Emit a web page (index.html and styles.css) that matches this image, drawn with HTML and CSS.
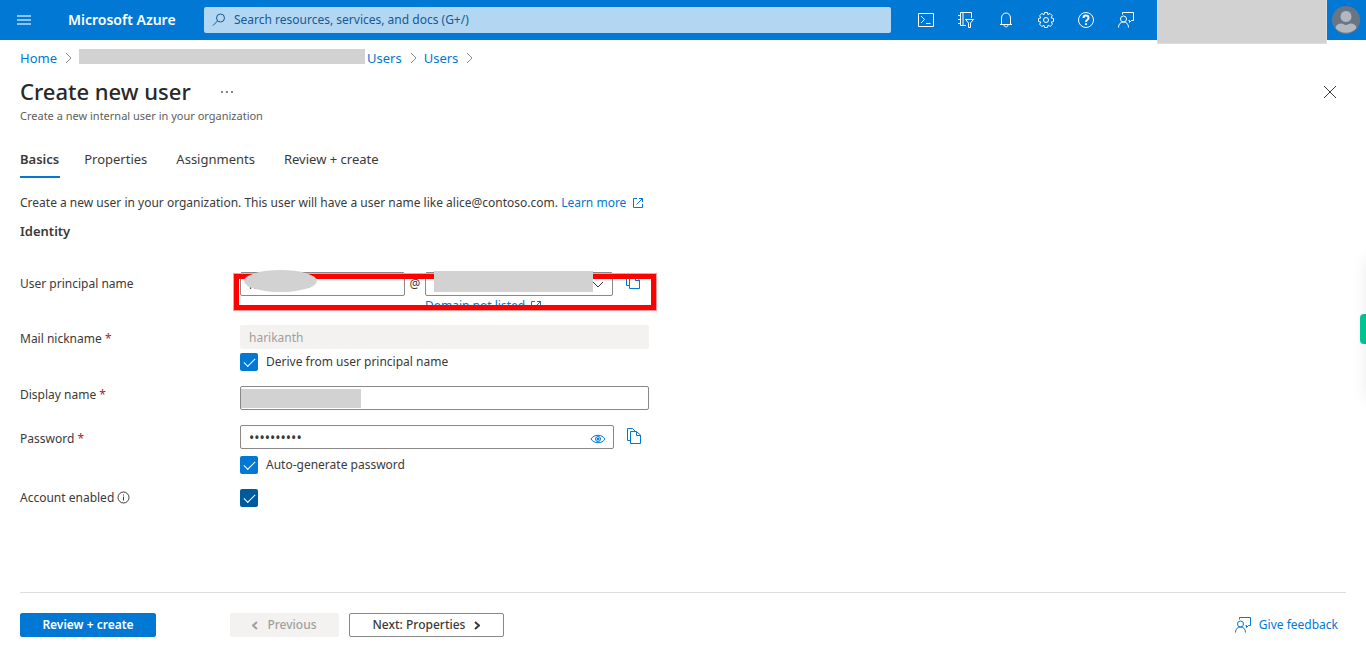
FILE: index.html
```html
<!DOCTYPE html>
<html lang="en">
<head>
<meta charset="utf-8">
<meta name="viewport" content="width=device-width, initial-scale=1">
<title>Create new user - Microsoft Azure</title>
<link rel="stylesheet" href="styles.css">
</head>
<body>
<svg class="defs" width="0" height="0" aria-hidden="true">
  <symbol id="copy" viewBox="0 0 16 16"><path d="M4.5 12.500H1.500V.5H6.500L9 3M4.500 3.500H10.500L14.500 7V15.500H4.500ZM10.500 3.500V7.500H14.500"/></symbol>
  <symbol id="external" viewBox="0 0 12 12"><path d="M5 1.500H1.500V10.500H10.500V7M7 1.500H10.500V5M10.500 1.500L4.500 7.500"/></symbol>
  <symbol id="feedback" viewBox="0 0 18 18"><path d="M5.500 3.500V1.500H16.500V9.500H14.500L12.500 11.500V9.500H11.500"/><circle cx="6.500" cy="8" r="3"/><path d="M1.500 16.500C1.500 13 3.500 11 6.500 11S11.500 13 11.500 16.500"/></symbol>
  <symbol id="chevron" viewBox="0 0 8 12"><path d="M1 1L6 6L1 11"/></symbol>
</svg>
<header class="topbar">
  <button class="icon-button menu" aria-label="Show portal menu"><svg width="14" height="10" viewBox="0 0 14 10"><path d="M0 1H14M0 5H14M0 9H14"/></svg></button>
  <a class="brand" href="#">Microsoft Azure</a>
  <div class="search">
    <svg width="14" height="14" viewBox="0 0 14 14"><circle cx="8.500" cy="5" r="4"/><path d="M5.500 8L1 12.500"/></svg>
    <input type="text" aria-label="Search" placeholder="Search resources, services, and docs (G+/)">
  </div>
  <nav class="tools" aria-label="Portal tools">
    <button class="icon-button" aria-label="Cloud Shell"><svg width="18" height="18" viewBox="0 0 18 18"><path d="M1.500 2.500H16.500V15.500H1.500ZM4 5L7.500 8.500L4 12M9 12.500H13.500"/></svg></button>
    <button class="icon-button" aria-label="Directories"><svg width="18" height="18" viewBox="0 0 18 18"><path d="M9 14.500H3.500V1.500H14.500V7M6 1.500V14.500M1 4.500H4M1 8.500H4M1 12.500H4M8.500 8.500H16.500L13.500 12V16.500H11.500V12Z"/></svg></button>
    <button class="icon-button" aria-label="Notifications"><svg width="18" height="18" viewBox="0 0 18 18"><path d="M3 13.500H15M4.500 13.500V7C4.500 4 6.500 2 9 2S13.500 4 13.500 7V13.500M7 14C7 16.500 11 16.500 11 14"/></svg></button>
    <button class="icon-button" aria-label="Settings"><svg width="18" height="18" viewBox="0 0 18 18"><circle cx="9" cy="9" r="2.500"/><path d="M7.600 1.500H10.400L10.900 3.700L13 2.400L15.200 4.600L14.100 6.800L16.500 7.500V10.500L14.300 11L15.500 13.200L13.300 15.300L11.100 14.200L10.400 16.500H7.600L7 14.300L4.800 15.500L2.600 13.200L3.800 11L1.500 10.500V7.500L3.800 6.900L2.600 4.700L4.800 2.500L7 3.700Z"/></svg></button>
    <button class="icon-button" aria-label="Help"><svg width="18" height="18" viewBox="0 0 18 18"><circle cx="9" cy="9" r="7.500"/><path class="heavy" d="M6.500 7C6.500 3.800 11.500 3.800 11.500 7C11.500 8.800 9 8.700 9 11M9 12.300V14"/></svg></button>
    <button class="icon-button" aria-label="Feedback"><svg width="18" height="18"><use href="#feedback"/></svg></button>
  </nav>
  <div class="account"><span class="account-mask"></span></div>
  <button class="avatar" aria-label="Account"><svg width="28" height="28" viewBox="0 0 28 28"><circle class="disc" cx="14" cy="14" r="14"/><path class="person" d="M3 22C4 18 7 17 10 17Q14 20 18 17C21 17 24 18 25 22A14 14 0 0 1 3 22Z"/><circle class="person" cx="14" cy="10.500" r="6"/></svg></button>
</header>

<main class="page">
  <nav class="crumbs" aria-label="Breadcrumb">
    <a href="#">Home</a><svg width="8" height="12"><use href="#chevron"/></svg><span class="crumb-mask"></span><a href="#">Users</a><svg width="8" height="12"><use href="#chevron"/></svg><a href="#">Users</a><svg width="8" height="12"><use href="#chevron"/></svg>
  </nav>
  <div class="heading">
    <h1>Create new user</h1>
    <button class="icon-button more" aria-label="More"><svg width="12" height="4" viewBox="0 0 12 4"><circle cx="1" cy="2" r="1"/><circle cx="6" cy="2" r="1"/><circle cx="11" cy="2" r="1"/></svg></button>
    <button class="icon-button close" aria-label="Close"><svg width="12" height="12" viewBox="0 0 12 12"><path d="M0 0L12 12M12 0L0 12"/></svg></button>
  </div>
  <p class="subtitle">Create a new internal user in your organization</p>

  <div class="tabs" role="tablist">
    <button role="tab" class="tab active" aria-selected="true">Basics</button>
    <button role="tab" class="tab">Properties</button>
    <button role="tab" class="tab">Assignments</button>
    <button role="tab" class="tab">Review + create</button>
  </div>

  <p class="intro">Create a new user in your organization. This user will have a user name like alice@contoso.com. <a href="#">Learn more <svg width="12" height="12"><use href="#external"/></svg></a></p>
  <h2>Identity</h2>

  <form class="form">
    <div class="row principal">
      <label for="upn">User principal name</label>
      <div class="upn">
        <div class="upn-line">
          <div class="name-box"><input id="upn" class="box" type="text" value="h"><span class="name-mask"></span></div>
          <span class="at">@</span>
          <div class="domain-box">
            <select class="box" aria-label="Domain"><option></option></select>
            <svg width="12" height="7" viewBox="0 0 12 7"><path d="M1 1L6 6L11 1"/></svg>
            <span class="domain-mask"></span>
          </div>
          <button type="button" class="icon-button copy" aria-label="Copy user principal name"><svg width="16" height="16"><use href="#copy"/></svg></button>
        </div>
        <a class="domain-link" href="#">Domain not listed <svg width="12" height="12"><use href="#external"/></svg></a>
        <span class="callout"></span>
      </div>
    </div>
    <div class="row">
      <label for="nick">Mail nickname <span class="req">*</span></label>
      <div class="field">
        <input id="nick" class="box" type="text" value="harikanth" disabled>
        <label class="check"><input type="checkbox" checked> Derive from user principal name</label>
      </div>
    </div>
    <div class="row display">
      <label for="display">Display name <span class="req">*</span></label>
      <div class="field name-box"><input id="display" class="box" type="text"><span class="display-mask"></span></div>
    </div>
    <div class="row password">
      <label for="pw">Password <span class="req">*</span></label>
      <div class="field">
        <div class="pw-line">
          <div class="pw-box"><input id="pw" class="box" type="password" value="abcdefghij" readonly>
            <button type="button" class="icon-button eye" aria-label="Show password"><svg width="16" height="10" viewBox="0 0 16 10"><path d="M1 5C4 0 12 0 15 5C12 10 4 10 1 5Z"/><circle cx="8" cy="5" r="2.500"/><circle class="pupil" cx="8" cy="5" r="1"/></svg></button></div>
          <button type="button" class="icon-button copy" aria-label="Copy password"><svg width="16" height="16"><use href="#copy"/></svg></button>
        </div>
        <label class="check auto"><input type="checkbox" checked> Auto-generate password</label>
      </div>
    </div>
    <div class="row enabled">
      <label for="enabled">Account enabled <svg width="13" height="13" viewBox="0 0 13 13"><circle cx="6.500" cy="6.500" r="5.500"/><path d="M6.500 5.500V9.500M6.500 3.500V4.500"/></svg></label>
      <div class="field check"><input id="enabled" class="dark" type="checkbox" checked></div>
    </div>
  </form>
</main>

<footer class="actions">
  <button class="btn primary">Review + create</button>
  <button class="btn previous" disabled><svg width="6" height="9" viewBox="0 0 6 9"><path d="M5 1L1 4.500L5 8"/></svg>Previous</button>
  <button class="btn next">Next: Properties<svg width="6" height="9" viewBox="0 0 6 9"><path d="M1 1L5 4.500L1 8"/></svg></button>
  <a class="feedback" href="#"><svg width="18" height="18"><use href="#feedback"/></svg>Give feedback</a>
</footer>
<div class="side-tab"></div>
</body>
</html>
```

FILE: styles.css
```css
* { box-sizing: border-box; }
body {
  margin: 0;
  min-height: 100vh;
  display: flex;
  flex-direction: column;
  overflow-x: hidden;
  font: 12px/18px "Segoe UI", "Noto Sans", "Open Sans", sans-serif;
  color: #3b3a39;
  background: #fff;
}
h1, h2, p { margin: 0; }
a { color: #0078d4; text-decoration: none; }
button, input, select { font: inherit; color: inherit; }
svg { display: block; flex: none; fill: none; stroke: currentColor; stroke-width: 1; }
.defs { position: absolute; }
.icon-button { border: 0; padding: 0; background: none; display: flex; align-items: center; justify-content: center; flex: none; }

.topbar { height: 40px; display: flex; align-items: center; background: #0078d4; color: #fff; }
.topbar .menu { width: 48px; height: 40px; color: #8cc4f0; }
.menu svg { stroke-width: 2; }
.brand { width: 136px; margin-left: 20px; color: #fff; font-size: 14px; font-weight: 600; white-space: nowrap; }
.search { flex: 0 1 687px; height: 26px; display: flex; align-items: center; gap: 8px; padding-left: 8px; background: #b3d6f2; color: #155a94; border-radius: 2px; }
.search input { flex: 1; min-width: 0; border: 0; padding: 0; background: none; }
.search input::placeholder { color: #155a94; opacity: 1; }
.tools { display: flex; margin-left: 15px; }
.tools .icon-button { width: 40px; height: 40px; }
.heavy { stroke-width: 2; }
.account { position: relative; width: 170px; height: 40px; margin-left: auto; }
.account-mask { position: absolute; inset: 0 0 -4px; background: #d2d2d2; border: solid #dedede; border-width: 0 1px 1px; }
.avatar { width: 39px; height: 40px; border: 0; padding: 0 5px; background: none; }
.avatar svg { stroke: none; }
.disc { fill: #697584; }
.person { fill: #b1b8bf; stroke: #697584; }

.page { flex: 1; padding: 9px 20px 0; }
.crumbs { display: flex; align-items: center; height: 18px; font-size: 13px; }
.crumbs svg { margin: 0 6px 0 8px; color: #8a8886; }
.crumb-mask { flex: 0 1 286px; height: 15px; margin: 0 2px 3px 0; background: #d2d2d2; }
.heading { display: flex; align-items: center; height: 30px; margin-top: 10px; }
h1 { padding-bottom: 2px; font-size: 22px; line-height: 28px; font-weight: 500; color: #292827; }
.more { margin-left: 30px; }
.more svg { fill: #605e5c; stroke: none; }
.close { width: 32px; height: 32px; margin-left: auto; }
.subtitle { font-size: 11px; color: #605e5c; }
.tabs { display: flex; height: 36px; margin-top: 17px; }
.tab { border: 0; margin-right: 29px; padding: 0 0 2px; background: none; font-size: 13px; }
.tab.active { margin-right: 24px; font-weight: 600; border-bottom: 2px solid #0078d4; padding: 2px 1px 2px 0; }
.intro { margin-top: 16px; }
.intro svg, .domain-link svg, .row label svg { display: inline-block; vertical-align: -2px; }
.intro svg, .domain-link svg { margin-left: 2px; }
h2 { margin-top: 10px; font-size: 13px; line-height: 18px; font-weight: 600; }

.form { margin-top: 32px; }
.row { display: grid; grid-template-columns: 220px minmax(0, 409px); }
.row > label { padding-top: 5px; }
.req { color: #a4262c; }
.box { display: block; width: 100%; height: 24px; padding: 0 8px; border: 1px solid #8a8886; border-radius: 2px; background: #fff; appearance: none; outline: 0; }
.box:disabled { border-color: #f3f2f1; background: #f3f2f1; color: #a19f9d; }
.upn, .name-box, .domain-box, .pw-box { position: relative; }
.upn-line, .pw-line { display: flex; align-items: center; }
.upn-line .name-box { flex: 0 1 165px; }
.at { width: 20px; text-align: center; }
.domain-box { flex: 0 1 188px; }
.domain-box svg { position: absolute; right: 9px; top: 9px; }
.icon-button.copy { width: 16px; margin-left: 12px; padding-bottom: 2px; color: #0078d4; }
.upn .icon-button.copy { padding-bottom: 6px; }
.name-mask { position: absolute; left: 4px; top: -2px; width: 73px; height: 22px; border-radius: 50%; background: #d2d2d2; z-index: 2; }
.domain-mask { position: absolute; left: 9px; top: -1px; width: 159px; height: 21px; background: #d2d2d2; z-index: 2; }
.domain-link { display: block; height: 18px; margin: 1px 0 0 185px; }
.callout { position: absolute; left: -6px; right: -7px; top: 2px; height: 36px; border: 5px solid #f00; outline: 1px solid #ff9c9c; z-index: 1; pointer-events: none; }
.principal { margin-bottom: 10px; }
.row.principal > label { padding-top: 3px; }
.check { display: flex; align-items: center; gap: 8px; margin-top: 4px; height: 18px; }
.check input { width: 18px; height: 18px; margin: 0; border-radius: 2px; appearance: none; background: #0078d4; display: grid; place-items: center; }
.check input::after { content: ""; width: 10px; height: 5px; margin-bottom: 3px; border: solid #fff; border-width: 0 0 1px 1px; transform: rotate(-45deg); }
.check .dark { background: #005a9e; }
.display { margin-top: 15px; }
.row.display > label { padding-top: 0; }
.display-mask { position: absolute; left: 1px; top: 3px; width: 120px; height: 19px; background: #d2d2d2; }
.password { margin-top: 15px; }
.pw-box { flex: 0 1 374px; }
.pw-box .box { font-size: 14px; }
.eye { position: absolute; right: 8px; top: 9px; color: #0078d4; }
.pupil { fill: currentColor; }
.auto { margin-top: 7px; }
.enabled { margin-top: 15px; }
.row.enabled > label { padding-top: 0; }
.enabled .check { margin-top: 0; }

.actions { display: flex; align-items: center; margin: 20px 20px 0; padding: 20px 0; border-top: 1px solid #dedede; }
.btn { display: flex; align-items: center; justify-content: center; gap: 9px; height: 24px; padding: 0; border: 1px solid #8a8886; border-radius: 2px; background: #fff; font-weight: 500; }
.btn svg { stroke-width: 2; }
.primary { width: 136px; border-color: #0078d4; background: #0078d4; color: #fff; font-weight: 600; }
.previous { width: 109px; margin-left: 74px; border-color: #f3f2f1; background: #f3f2f1; color: #a19f9d; }
.next { width: 155px; margin-left: 10px; }
.feedback { display: flex; align-items: center; gap: 7px; margin: 0 8px 0 auto; }
.side-tab { position: fixed; right: 0; top: 314px; width: 6px; height: 30px; border-radius: 4px 0 0 4px; background: #00c896; }
.side-tab::before { content: ""; position: absolute; left: 6px; top: -55px; width: 20px; height: 140px; box-shadow: 0 0 16px rgba(0, 0, 0, 0.08); }
```
